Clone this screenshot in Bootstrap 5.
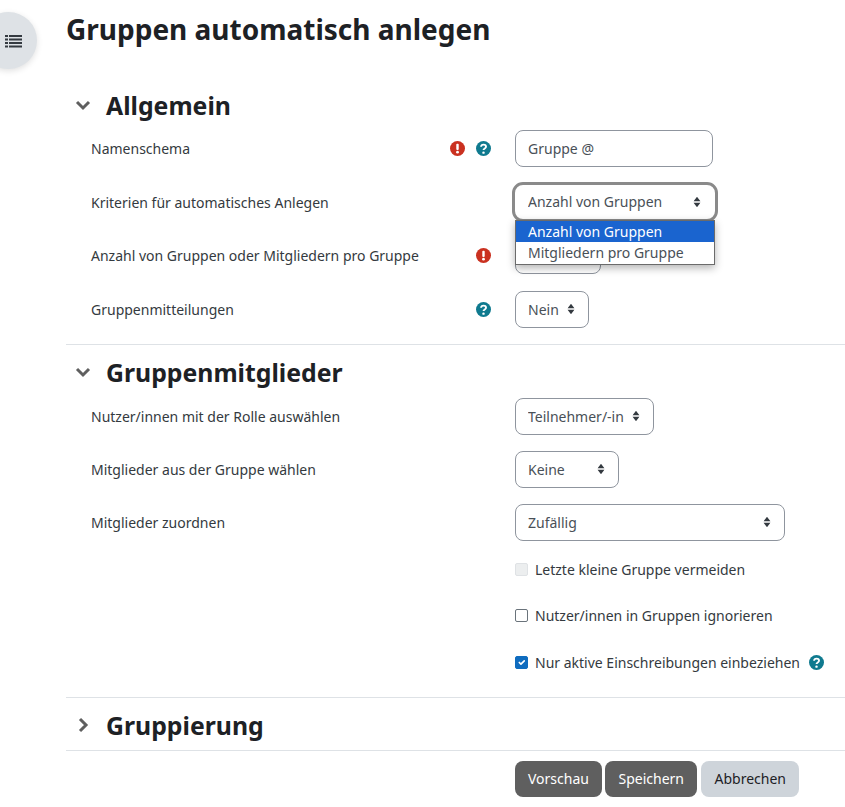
<!DOCTYPE html>
<html lang="de">
<head>
  <meta charset="utf-8">
  <link href="https://cdn.jsdelivr.net/npm/bootstrap@5.3.3/dist/css/bootstrap.min.css" rel="stylesheet">
  <title>Gruppen automatisch anlegen</title>
  <style>
    body {
      font-family: "Noto Sans", "Open Sans", sans-serif;
      font-size: 14px;
      color: #1d2125;
      overflow: hidden;
    }
    .page-wrap { padding: 9px 0 0 66px; }
    .page-title { font-size: 28px; font-weight: 700; line-height: 40px; margin: 0 0 38px; }
    /* drawer toggle on the left edge */
    .drawer-toggle {
      position: absolute; left: -20px; top: 12px;
      width: 57px; height: 57px;
      border: 0; border-radius: 50%;
      background: #dee2e6;
      box-shadow: 0 2px 6px rgba(0, 0, 0, .12);
      display: flex; align-items: center; justify-content: flex-end;
      padding: 0 15px 0 0;
    }
    .section-head { display: flex; align-items: center; height: 36px; margin: 0; }
    .section-head h2 { font-size: 24.8px; font-weight: 700; margin: 0; line-height: 36px; }
    .chev-box { width: 40px; padding-left: 9px; display: flex; }
    .form-line { display: flex; min-height: 37px; margin-bottom: 16px; }
    .first-block .form-line { margin-bottom: 16.67px; }
    .first-block .form-line:last-child { margin-bottom: 16px; }
    .head-one { margin-bottom: 7px; }
    .line-label { width: 449px; padding-left: 25px; padding-right: 24px; display: flex; align-items: center; color: #343a40; }
    .line-label span { flex-grow: 1; }
    .line-icons { display: flex; gap: 11px; align-items: center; }
    .line-icons svg { width: 15px; height: 15px; }
    .ctl, .ctl:focus {
      font-size: 14px; height: 37px; color: #495057;
      border: 1px solid #8f959e; border-radius: 8px;
      padding: 0 12px; box-shadow: none;
    }
    select.ctl {
      background-image: url("data:image/svg+xml,%3Csvg xmlns='http://www.w3.org/2000/svg' viewBox='0 0 10 14'%3E%3Cpath fill='%23343a40' d='M5 1l4 5H1zM5 13L1 8h8z'/%3E%3C/svg%3E");
      background-size: 10px 12px;
      background-position: right 12px center;
      padding-right: 28px;
    }
    .w-name { width: 198px; }
    .w-crit { width: 200px; margin-top: 1px; }
    .w-crit, .w-crit:focus { height: 34px; outline: 3px solid #8a8a8a; outline-offset: 0; border-color: #fff; }
    .w-anz { width: 86px; }
    .w-nein { width: 74px; }
    .w-role { width: 139px; }
    .w-keine { width: 104px; }
    .w-zuf { width: 270px; }
    .crit-wrap { position: relative; }
    .open-list {
      position: absolute; left: 0; top: 36px; width: 200px; z-index: 5;
      background: #fff; border: 1px solid #6b6b6b;
      box-shadow: 0 3px 8px rgba(0, 0, 0, .3);
      color: #495057; line-height: 21.5px;
    }
    .open-list div { padding-left: 12px; }
    .open-list .picked { background: #1a64cf; color: #fff; }
    .sep { border-top: 1px solid #dee2e6; }
    .check-line { margin-left: 449px; display: flex; align-items: center; height: 21px; color: #343a40; }
    .check-line + .check-line { margin-top: 25.5px; }
    .check-line .form-check-input { width: 13px; height: 13px; margin: 0 7px 0 0; border-color: #6a737b; border-radius: 2px; }
    .check-line .form-check-input:checked { background-color: #0f6cbf; border-color: #0f6cbf; }
    .check-line .form-check-input:disabled { opacity: 1; background-color: #eceeef; border-color: #dfe2e5; }
    .check-line svg { width: 15px; height: 15px; margin-left: 9px; }
    .checks-top { margin-top: 18px; }
    .head-two { margin: 9px 0 8px; }
    .head-three { margin: 9px 0 7px; }
    .sep-checks { margin-top: 24px; }
    .btn-row { margin: 10px 0 0 449px; }
    .act-btn { font-size: 14px; height: 36px; padding: 0 13px; border-radius: 8px; border: 0; }
    .act-save { margin-left: -1px; padding: 0 13.5px; }
    .act-dark { background: #5f5f5f; color: #fff; }
    .act-light { background: #ced4da; color: #1d2125; }
  </style>
</head>
<body>
  <button class="drawer-toggle" type="button" aria-label="Index">
    <svg width="17" height="14" viewBox="0 0 17 14" fill="#343a40">
      <rect x="0" y="1" width="3" height="2"/><rect x="4" y="1" width="13" height="2"/>
      <rect x="0" y="4.5" width="3" height="2"/><rect x="4" y="4.5" width="13" height="2"/>
      <rect x="0" y="8" width="3" height="2"/><rect x="4" y="8" width="13" height="2"/>
      <rect x="0" y="11.5" width="3" height="2"/><rect x="4" y="11.5" width="13" height="2"/>
    </svg>
  </button>

  <svg width="0" height="0" class="position-absolute">
    <symbol id="ic-err" viewBox="0 0 16 16">
      <circle cx="8" cy="8" r="8" fill="#ca3120"/>
      <rect x="6.7" y="3" width="2.6" height="6.5" rx="1" fill="#fff"/>
      <circle cx="8" cy="11.9" r="1.5" fill="#fff"/>
    </symbol>
    <symbol id="ic-help" viewBox="0 0 16 16">
      <circle cx="8" cy="8" r="8" fill="#0f7a8f"/>
      <path d="M5.4 6.2C5.5 4.6 6.7 3.9 8 3.9c1.500 0 2.700.9 2.700 2.200 0 1.900-2.700 1.900-2.700 3.600" fill="none" stroke="#fff" stroke-width="2"/>
      <circle cx="8" cy="12.4" r="1.300" fill="#fff"/>
    </symbol>
  </svg>

  <div class="page-wrap">
    <h1 class="page-title">Gruppen automatisch anlegen</h1>

    <form>
      <!-- Allgemein -->
      <div class="first-block">
        <div class="section-head head-one">
          <div class="chev-box">
            <svg width="16" height="16" viewBox="0 0 16 16"><path d="M2 5l6 6 6-6" fill="none" stroke="#5f5f5f" stroke-width="3"/></svg>
          </div>
          <h2>Allgemein</h2>
        </div>

        <div class="form-line">
          <div class="line-label"><span>Namenschema</span>
            <div class="line-icons"><svg><use href="#ic-err"/></svg><svg><use href="#ic-help"/></svg></div>
          </div>
          <input class="form-control ctl w-name" type="text" value="Gruppe @">
        </div>

        <div class="form-line">
          <div class="line-label"><span>Kriterien für automatisches Anlegen</span></div>
          <div class="crit-wrap">
            <select class="form-select ctl w-crit"><option>Anzahl von Gruppen</option><option>Mitgliedern pro Gruppe</option></select>
            <div class="open-list">
              <div class="picked">Anzahl von Gruppen</div>
              <div>Mitgliedern pro Gruppe</div>
            </div>
          </div>
        </div>

        <div class="form-line">
          <div class="line-label"><span>Anzahl von Gruppen oder Mitgliedern pro Gruppe</span>
            <div class="line-icons"><svg><use href="#ic-err"/></svg></div>
          </div>
          <input class="form-control ctl w-anz" type="text">
        </div>

        <div class="form-line">
          <div class="line-label"><span>Gruppenmitteilungen</span>
            <div class="line-icons"><svg><use href="#ic-help"/></svg></div>
          </div>
          <select class="form-select ctl w-nein"><option>Nein</option></select>
        </div>
      </div>

      <div class="sep"></div>

      <!-- Gruppenmitglieder -->
      <div class="section-head head-two">
        <div class="chev-box">
          <svg width="16" height="16" viewBox="0 0 16 16"><path d="M2 5l6 6 6-6" fill="none" stroke="#5f5f5f" stroke-width="3"/></svg>
        </div>
        <h2>Gruppenmitglieder</h2>
      </div>

      <div class="form-line">
        <div class="line-label"><span>Nutzer/innen mit der Rolle auswählen</span></div>
        <select class="form-select ctl w-role"><option>Teilnehmer/-in</option></select>
      </div>
      <div class="form-line">
        <div class="line-label"><span>Mitglieder aus der Gruppe wählen</span></div>
        <select class="form-select ctl w-keine"><option>Keine</option></select>
      </div>
      <div class="form-line">
        <div class="line-label"><span>Mitglieder zuordnen</span></div>
        <select class="form-select ctl w-zuf"><option>Zufällig</option></select>
      </div>

      <div class="check-line checks-top"><input class="form-check-input" type="checkbox" disabled><span>Letzte kleine Gruppe vermeiden</span></div>
      <div class="check-line"><input class="form-check-input" type="checkbox"><span>Nutzer/innen in Gruppen ignorieren</span></div>
      <div class="check-line"><input class="form-check-input" type="checkbox" checked><span>Nur aktive Einschreibungen einbeziehen</span><svg><use href="#ic-help"/></svg></div>

      <div class="sep sep-checks"></div>

      <!-- Gruppierung -->
      <div class="section-head head-three">
        <div class="chev-box">
          <svg width="16" height="16" viewBox="0 0 16 16"><path d="M5 2l6 6-6 6" fill="none" stroke="#5f5f5f" stroke-width="3"/></svg>
        </div>
        <h2>Gruppierung</h2>
      </div>
      <div class="sep"></div>

      <div class="d-flex gap-1 btn-row">
        <button class="btn act-btn act-dark" type="button">Vorschau</button>
        <button class="btn act-btn act-dark act-save" type="button">Speichern</button>
        <button class="btn act-btn act-light" type="button">Abbrechen</button>
      </div>
    </form>
  </div>
</body>
</html>
